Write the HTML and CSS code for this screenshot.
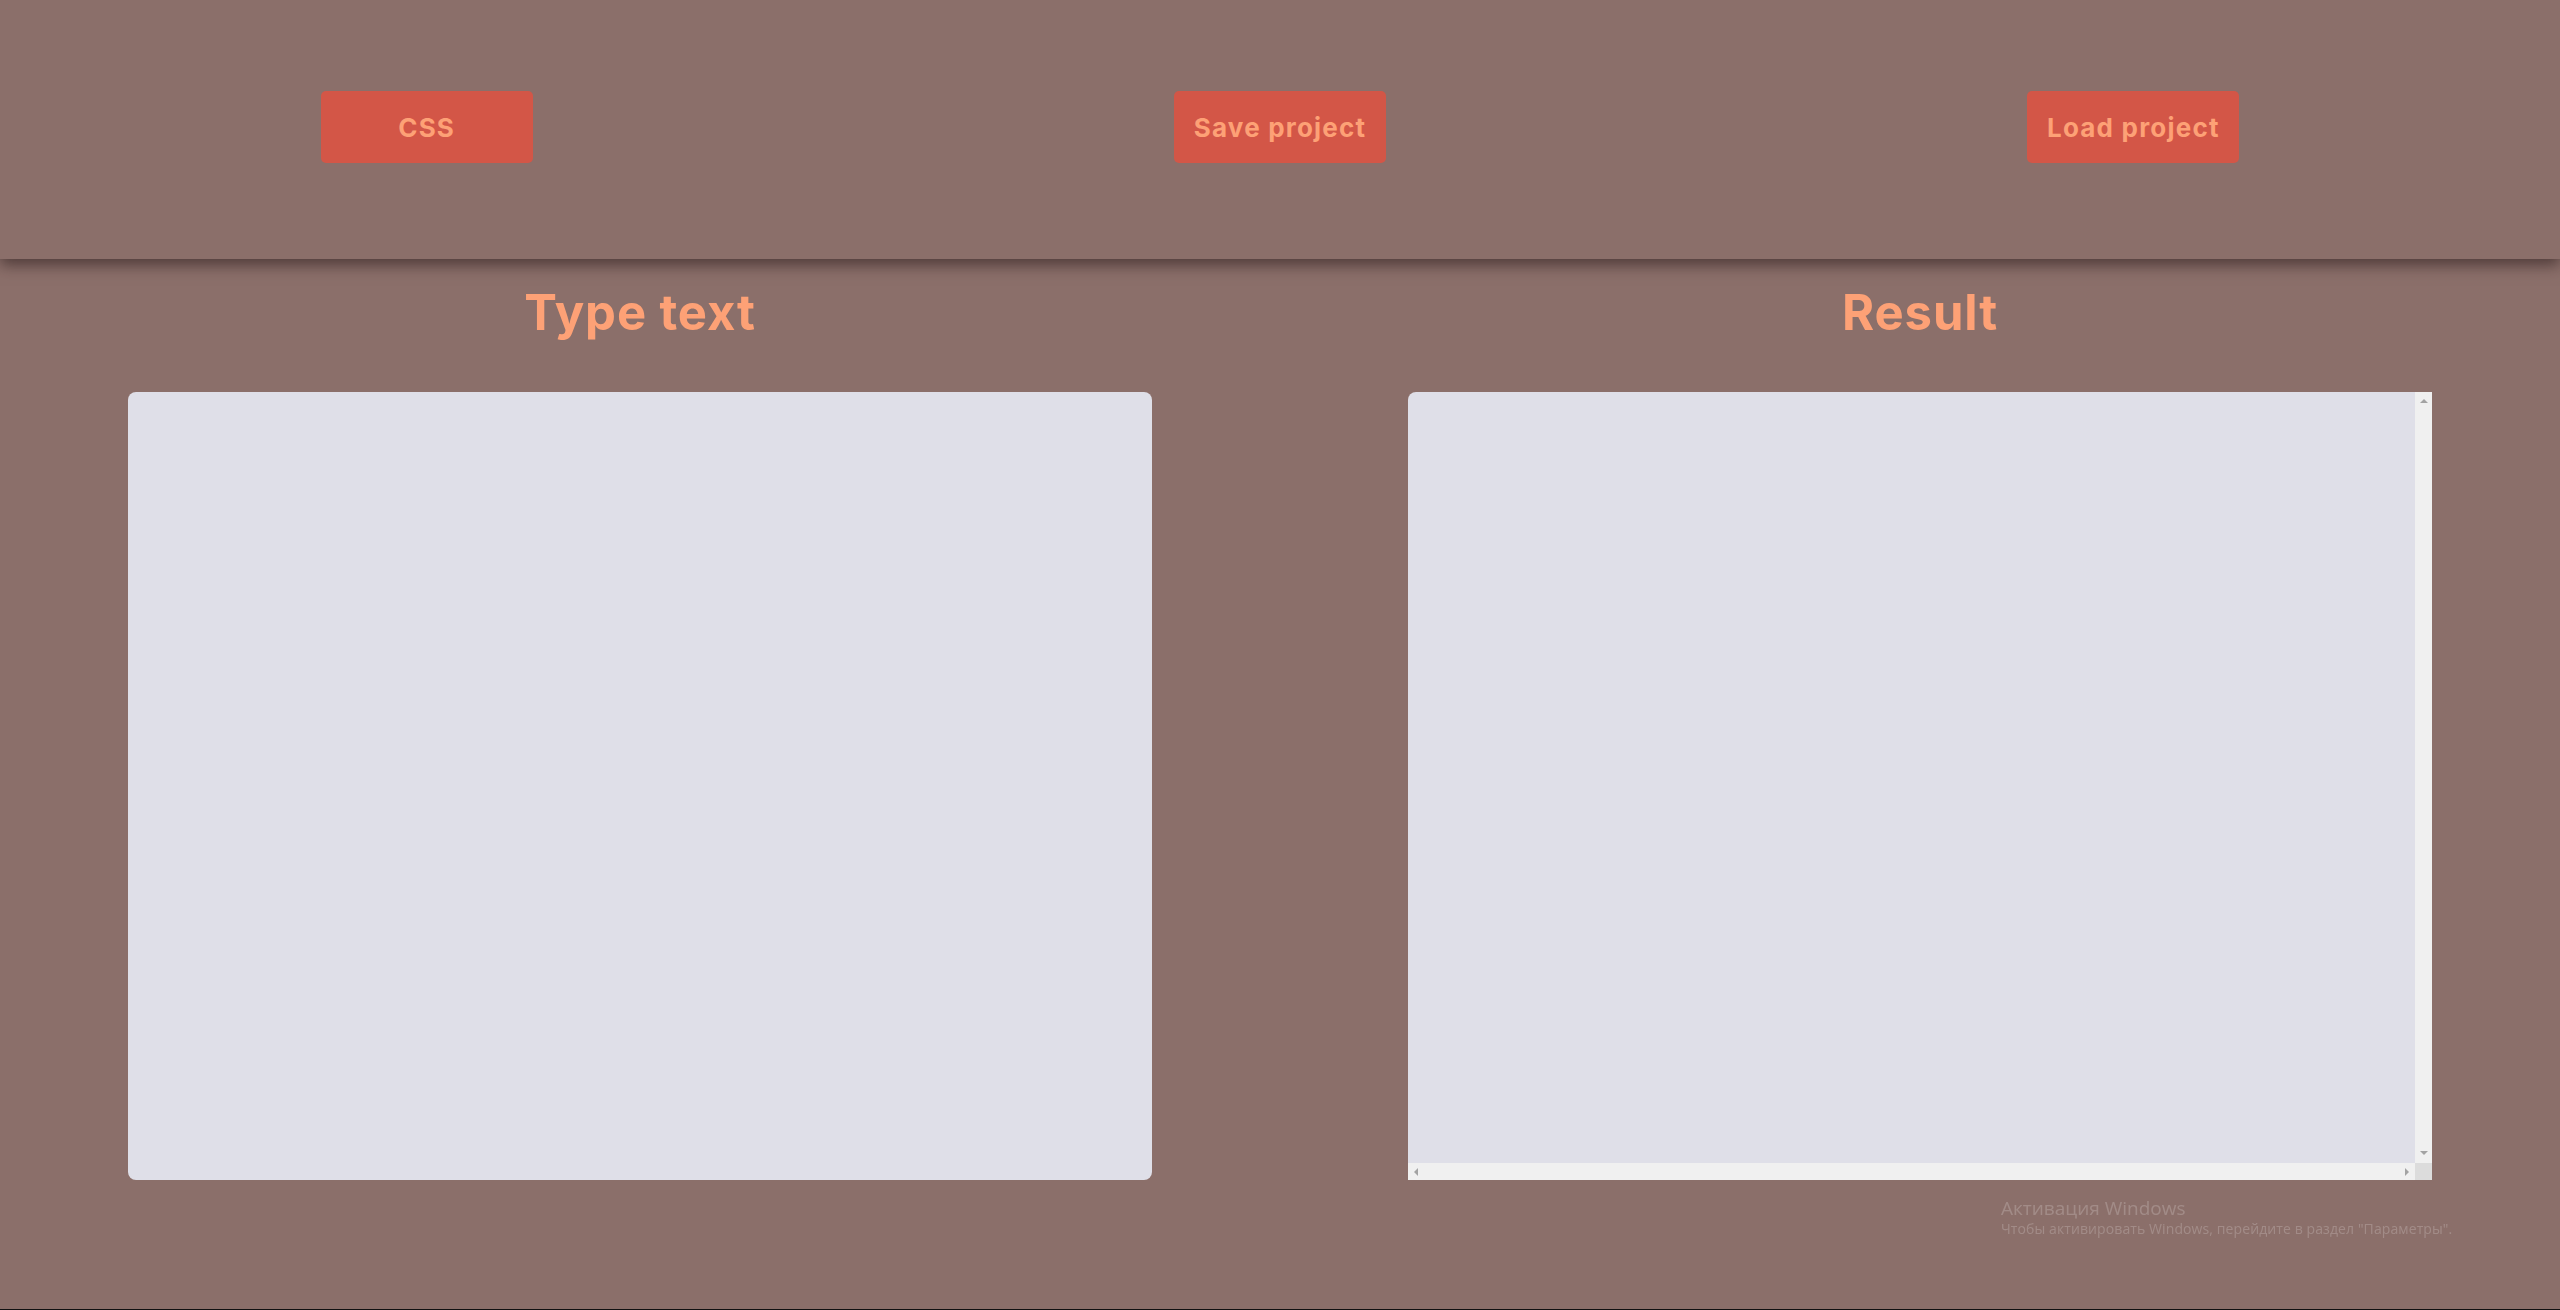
FILE: index.html
```html
<!DOCTYPE html>
<html lang="en">
<head>
<meta charset="utf-8">
<title>Editor</title>
<link rel="stylesheet" href="styles.css">
</head>
<body>
<header class="topbar">
  <div class="slot"><button class="btn">CSS</button></div>
  <div class="slot"><button class="btn">Save project</button></div>
  <div class="slot"><button class="btn">Load project</button></div>
</header>
<main class="panes">
  <section class="pane">
    <h2 class="title">Type text</h2>
    <textarea class="editor"></textarea>
  </section>
  <section class="pane">
    <h2 class="title">Result</h2>
    <div class="result">
      <div class="result-view"></div>
      <div class="vscroll">
        <span class="arrow arrow-up"></span>
        <span class="arrow arrow-down"></span>
      </div>
      <div class="hscroll">
        <span class="arrow arrow-left"></span>
        <span class="arrow arrow-right"></span>
      </div>
      <div class="corner"></div>
    </div>
  </section>
</main>
<div class="watermark">
  <div class="wm-title">Активация Windows</div>
  <div class="wm-sub">Чтобы активировать Windows, перейдите в раздел "Параметры".</div>
</div>
<div class="edge"></div>
</body>
</html>
```

FILE: styles.css
```css
* { box-sizing: border-box; }
html, body { margin: 0; padding: 0; height: 1310px; overflow: hidden; }
body {
  background: #8b6f6a;
  font-family: Inter, "Noto Sans", sans-serif;
}
.topbar {
  height: 259px;
  display: grid;
  grid-template-columns: 1fr 1fr 1fr;
  align-items: center;
  background: #8b6f6a;
  box-shadow: 0 6px 14px rgba(40, 25, 25, 0.6);
  position: relative;
  z-index: 1;
  padding-bottom: 6px;
}
.slot { display: flex; justify-content: center; }
.btn {
  width: 212px;
  height: 72px;
  border: none;
  border-radius: 5px;
  background: #d35647;
  color: #fda176;
  font-family: Inter, "Noto Sans", sans-serif;
  font-weight: 700;
  font-size: 26px;
  letter-spacing: 1.2px;
  padding: 2px 0 0;
}
.panes {
  display: grid;
  grid-template-columns: 1fr 1fr;
}
.pane {
  display: flex;
  flex-direction: column;
  align-items: center;
  padding-top: 24px;
}
.title {
  margin: 0;
  height: 60px;
  line-height: 60px;
  font-size: 49px;
  font-weight: 700;
  letter-spacing: 0.9px;
  color: #fda176;
  margin-bottom: 49px;
}
.editor {
  display: block;
  width: 1024px;
  height: 788px;
  border: none;
  border-radius: 8px;
  background: #dfdfe8;
  resize: none;
  margin: 0;
  padding: 0;
  outline: none;
}
.result {
  width: 1024px;
  height: 788px;
  display: grid;
  grid-template-columns: 1fr 17px;
  grid-template-rows: 1fr 17px;
  border-top-left-radius: 8px;
  overflow: hidden;
}
.result-view { background: #dfdfe8; }
.vscroll, .hscroll {
  background: #f0f0f0;
  display: flex;
  justify-content: space-between;
  align-items: center;
}
.vscroll { flex-direction: column; padding: 7px 0 8px; }
.hscroll { padding: 0 6px 0 6px; }
.corner { background: #dcdcdc; }
.arrow { width: 0; height: 0; display: block; }
.arrow-up {
  border-left: 4px solid transparent;
  border-right: 4px solid transparent;
  border-bottom: 4px solid #a3a3a3;
}
.arrow-down {
  border-left: 4px solid transparent;
  border-right: 4px solid transparent;
  border-top: 4px solid #a3a3a3;
}
.arrow-left {
  border-top: 4px solid transparent;
  border-bottom: 4px solid transparent;
  border-right: 4px solid #a3a3a3;
}
.arrow-right {
  border-top: 4px solid transparent;
  border-bottom: 4px solid transparent;
  border-left: 4px solid #a3a3a3;
}
.watermark {
  position: fixed;
  left: 2001px;
  top: 1196px;
  color: rgba(255, 255, 255, 0.2);
  font-family: "Open Sans", "Noto Sans", sans-serif;
}
.wm-title { font-size: 19px; line-height: 24px; }
.wm-sub { font-size: 14px; line-height: 17px; letter-spacing: 0.1px; }
.edge {
  position: fixed;
  left: 0;
  right: 0;
  bottom: 0;
  height: 1px;
  background: #111;
}
```
